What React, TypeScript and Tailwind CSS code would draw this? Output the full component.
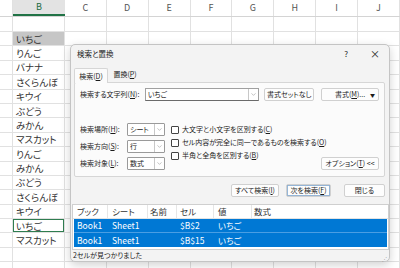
import { ChevronDown } from 'lucide-react';

const cells = [
  '', 'いちご', 'りんご', 'バナナ', 'さくらんぼ', 'キウイ', 'ぶどう', 'みかん', 'マスカット',
  'りんご', 'みかん', 'ぶどう', 'さくらんぼ', 'キウイ', 'いちご', 'マスカット', '', '',
];
const cols = ['C', 'D', 'E', 'F', 'G', 'H', 'I', 'J'];

function Sheet() {
  return (
    <div className="flex flex-col">
      <div className="flex h-[17px] border-b border-[#d4d4d4] text-[9px] text-[#555]">
        <div className="w-[13px] border-r border-[#e1e1e1]" />
        <div className="w-[52px] flex items-center justify-center bg-[#e3e3e3] border-b-2 border-[#217346] text-[#1e6b41]">B</div>
        {cols.map((c) => (
          <div key={c} className="w-[42px] flex items-center justify-center border-r border-[#e1e1e1]">{c}</div>
        ))}
      </div>
      {cells.map((v, i) => (
        <div key={i} className={`flex border-b border-[#e1e1e1] ${i === 0 ? 'h-[15px]' : 'h-[14.4px]'}`}>
          <div className="w-[13px] border-r border-[#e1e1e1]" />
          <div
            className={`w-[52px] flex items-center pl-[3px] text-[9.5px] text-[#333] border-r border-[#e1e1e1] ${
              i === 1 ? 'bg-[#c6c6c6]' : ''
            } ${i === 14 ? 'shadow-[inset_0_0_0_1px_#2f7d50]' : ''}`}
          >
            {v}
          </div>
          {cols.map((c) => (
            <div key={c} className="w-[42px] border-r border-[#e1e1e1]" />
          ))}
        </div>
      ))}
    </div>
  );
}

function Select({ label, value }: { label: React.ReactNode; value: string }) {
  return (
    <div className="flex items-center h-[13px]">
      <span className="w-[47px] whitespace-nowrap">{label}</span>
      <div className="w-[38px] h-[13px] flex bg-white border border-[#9a9a9a] rounded-[1px]">
        <span className="flex-1 pl-[2px] flex items-center">{value}</span>
        <span className="w-[10px] flex items-center justify-center border-l border-[#c8c8c8] text-[#777]">
          <ChevronDown size={7} strokeWidth={1.5} />
        </span>
      </div>
    </div>
  );
}

function Check({ children }: { children: React.ReactNode }) {
  return (
    <div className="flex items-center h-[13px] gap-[3px] whitespace-nowrap">
      <span className="w-[8px] h-[8px] shrink-0 border border-[#444] rounded-[1px] bg-white" />
      <span>{children}</span>
    </div>
  );
}

function Btn({ w, children, cls = '' }: { w: string; children: React.ReactNode; cls?: string }) {
  return (
    <div className={`${w} h-[13px] flex items-center justify-center whitespace-nowrap bg-[#fdfdfd] border border-[#d0d0d0] rounded-[2px] ${cls}`}>
      {children}
    </div>
  );
}

function Dialog() {
  return (
    <div className="absolute left-[70px] top-[44px] w-[320px] h-[218px] rounded-[5px] border border-[#c4c4c4] bg-[#f3f3f3] shadow-[0_3px_10px_rgba(0,0,0,0.18)] flex flex-col text-[7px] text-[#1b1b1b]">
      <div className="h-[17px] flex items-center pl-[6px] pr-[9px]">
        <span className="text-[7.5px]">検索と置換</span>
        <span className="ml-auto text-[8px] mr-[22px]">?</span>
        <span className="text-[10px] leading-none">×</span>
      </div>
      <div className="mt-[5px] h-[15px] flex ml-[3px]">
        <div className="w-[34px] flex items-center justify-center bg-[#fbfbfb] border border-b-0 border-[#d6d6d6] rounded-t-[2px] relative top-[1px]">
          検索(<u>D</u>)
        </div>
        <div className="w-[34px] flex items-center justify-center">置換(<u>P</u>)</div>
      </div>
      <div className="ml-[3px] mr-[4px] h-[95px] border border-[#d6d6d6] bg-[#fbfbfb] rounded-[2px] px-[5px] pt-[5px] flex flex-col">
        <div className="flex h-[13px] items-center">
          <span className="w-[65px] whitespace-nowrap">検索する文字列(<u>N</u>):</span>
          <div className="w-[115px] h-[13px] flex bg-white border border-[#a0a0a0] border-b-[#6a6a6a]">
            <span className="flex-1 pl-[2px] flex items-center">いちご</span>
            <span className="w-[10px] flex items-center justify-center border-l border-[#c8c8c8] text-[#777]">
              <ChevronDown size={7} strokeWidth={1.5} />
            </span>
          </div>
          <Btn w="w-[50px] ml-[5px]" cls="border-[#3a3a3a]">書式セットなし</Btn>
          <div className="w-[58px] h-[13px] ml-[7px] flex items-center bg-[#fdfdfd] border border-[#d0d0d0] rounded-[2px] relative">
            <span className="flex-1 text-center">書式(<u>M</u>)...</span>
            <span className="absolute right-[3px] text-[5px]">▼</span>
          </div>
        </div>
        <div className="mt-[22px] flex">
          <div className="flex flex-col gap-[4px]">
            <Select label={<>検索場所(<u>H</u>):</>} value="シート" />
            <Select label={<>検索方向(<u>S</u>):</>} value="行" />
            <Select label={<>検索対象(<u>L</u>):</>} value="数式" />
          </div>
          <div className="ml-[6px] w-0 flex flex-col flex-1">
            <Check>大文字と小文字を区別する(<u>C</u>)</Check>
            <Check>セル内容が完全に同一であるものを検索する(<u>O</u>)</Check>
            <Check>半角と全角を区別する(<u>B</u>)</Check>
          </div>
          <div className="self-end">
            <Btn w="w-[58px]">オプション(<u>T</u>) &lt;&lt;</Btn>
          </div>
        </div>
      </div>
      <div className="mt-[7px] flex justify-end pr-[4px]">
        <Btn w="w-[48px]">すべて検索(<u>I</u>)</Btn>
        <Btn w="w-[45px] ml-[7px]" cls="border-[#2d6fb0] shadow-[inset_0_0_0_0.5px_#2d6fb0]">次を検索(<u>F</u>)</Btn>
        <Btn w="w-[41px] ml-[13px]">閉じる</Btn>
      </div>
      <div className="mt-[7px] ml-[1px] h-[46px] border border-[#cfcfcf] bg-white flex flex-col text-[8.5px]">
        <div className="h-[14px] flex items-stretch border-b border-[#e3e3e3] text-[#333]">
          <div className="w-[35px] pl-[4px] flex items-center border-r border-[#e6e6e6]">ブック</div>
          <div className="w-[40px] pl-[4px] flex items-center border-r border-[#e6e6e6]">シート</div>
          <div className="w-[29px] pl-[2px] flex items-center border-r border-[#e6e6e6]">名前</div>
          <div className="w-[37px] pl-[3px] flex items-center border-r border-[#e6e6e6]">セル</div>
          <div className="w-[38px] pl-[4px] flex items-center border-r border-[#e6e6e6]">値</div>
          <div className="flex-1 pl-[2px] flex items-center">数式</div>
        </div>
        {['$B$2', '$B$15'].map((cell, i) => (
          <div key={i} className={`mx-[1px] h-[14px] flex items-center bg-[#0078d4] text-white ${i === 0 ? 'border-b border-[#4a9ee3]' : ''}`}>
            <div className="w-[34px] pl-[3px]">Book1</div>
            <div className="w-[40px] pl-[4px]">Sheet1</div>
            <div className="w-[29px]" />
            <div className="w-[37px] pl-[3px]">{cell}</div>
            <div className="w-[38px] pl-[4px]">いちご</div>
          </div>
        ))}
      </div>
      <div className="h-[11px] flex items-center pl-[2px] relative">
        2セルが見つかりました
        <span className="absolute right-[2px] bottom-[0px] text-[5px] text-[#999] leading-none">⋰</span>
      </div>
    </div>
  );
}

export default function App() {
  return (
    <div className="relative w-[400px] h-[268px] overflow-hidden bg-white font-['Noto_Sans_CJK_JP',sans-serif] [font-feature-settings:'palt']">
      <Sheet />
      <Dialog />
    </div>
  );
}
